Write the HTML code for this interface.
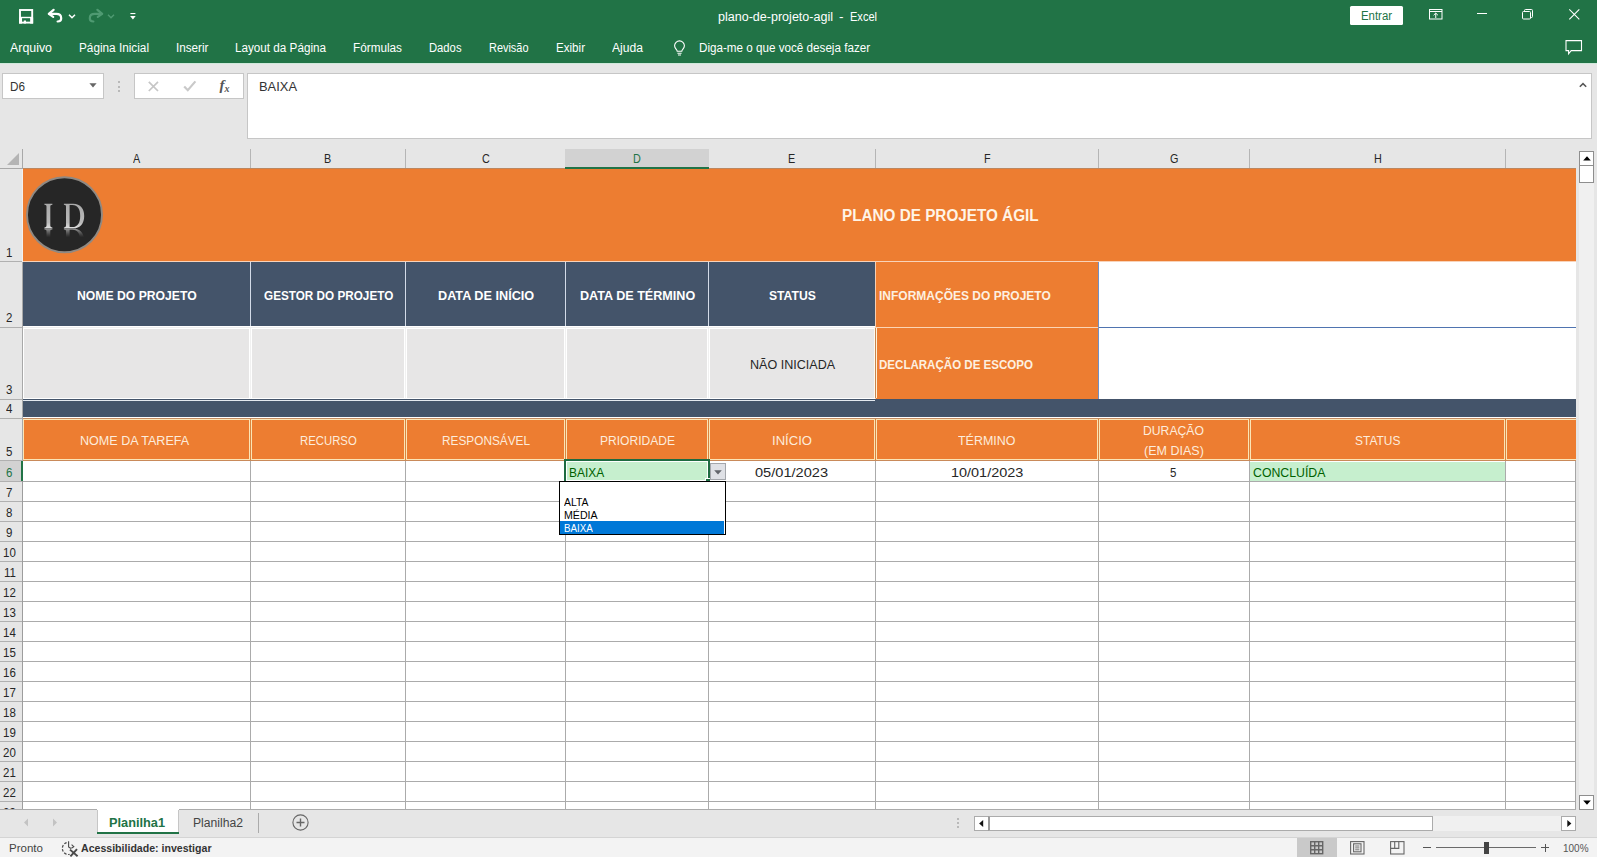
<!DOCTYPE html>
<html><head><meta charset="utf-8"><title>Excel</title>
<style>
html,body{margin:0;padding:0;}
body{width:1597px;height:857px;overflow:hidden;position:relative;background:#e6e6e6;font-family:"Liberation Sans",sans-serif;font-size:12px;color:#222;}
.abs{position:absolute;}
.t{position:absolute;white-space:nowrap;line-height:1;}
svg{position:absolute;overflow:visible;}
</style></head><body>

<div class="abs" style="left:0px;top:0px;width:1597px;height:63px;background:#217346;"></div>
<div class="abs" style="left:0px;top:63px;width:1597px;height:1px;background:#cfe8da;"></div>
<svg style="left:19px;top:8.8px" width="15" height="15" viewBox="0 0 15 15" fill="none" stroke="#fff"><rect x="1" y="1" width="12.2" height="12.6" stroke-width="1.9"/><path d="M1 8.500h12.200" stroke-width="1.400"/><rect x="0.050" y="8.500" width="3" height="6.050" fill="#fff" stroke="none"/><rect x="11.150" y="8.500" width="3" height="6.050" fill="#fff" stroke="none"/><rect x="4.800" y="11.500" width="2.200" height="3" fill="#fff" stroke="none"/></svg>
<svg style="left:47px;top:8px" width="18" height="16" viewBox="0 0 18 16" fill="none" stroke="#fff" stroke-width="2.2" stroke-linecap="round" stroke-linejoin="round"><path d="M6.6 1.8L1.8 5.9l4.4 2.9"/><path d="M2.4 5.9h6.8c3.200 0 5 1.800 5 4.300 0 2-1.400 3.300-3.600 3.300"/></svg>
<svg style="left:68px;top:13.5px" width="8" height="5" viewBox="0 0 8 5" fill="none" stroke="#fff" stroke-width="1.5"><path d="M1 0.8l3 2.900 3-2.900"/></svg>
<svg style="left:86px;top:8px" width="18" height="16" viewBox="0 0 18 16" fill="none" stroke="#4f9a72" stroke-width="2.2" stroke-linecap="round" stroke-linejoin="round"><path d="M11.400 1.800l4.800 4.100-4.400 2.900"/><path d="M15.600 5.900H8.800c-3.200 0-5 1.800-5 4.300 0 2 1.400 3.300 3.600 3.300"/></svg>
<svg style="left:107px;top:13.500px" width="8" height="5" viewBox="0 0 8 5" fill="none" stroke="#4f9a72" stroke-width="1.4"><path d="M1 0.8l3 2.900 3-2.900"/></svg>
<svg style="left:130px;top:12.6px" width="6" height="8" viewBox="0 0 6 8"><rect x="0.4" y="0" width="5" height="1.100" fill="#fff"/><path d="M0.1 3h5.600L2.900 6.600z" fill="#fff"/></svg>
<div class="t" style="left:718.00px;top:10px;line-height:14px;font-size:12px;color:#fff;font-weight:normal;transform:scaleX(1.0448);transform-origin:0 0;">plano-de-projeto-agil</div>
<div class="t" style="left:839.00px;top:10px;line-height:14px;font-size:12px;color:#fff;font-weight:normal;transform:scaleX(1.1260);transform-origin:0 0;">-</div>
<div class="t" style="left:850.00px;top:10px;line-height:14px;font-size:12px;color:#fff;font-weight:normal;transform:scaleX(0.9201);transform-origin:0 0;">Excel</div>
<div class="abs" style="left:1350px;top:6px;width:53px;height:19px;background:#fff;border-radius:1.5px"></div>
<div class="t" style="left:1361.00px;top:9px;line-height:14px;font-size:12px;color:#217346;font-weight:normal;transform:scaleX(0.9486);transform-origin:0 0;">Entrar</div>
<svg style="left:1429px;top:9px" width="14" height="11" viewBox="0 0 14 11" fill="none" stroke="#fff" stroke-width="1"><rect x="0.5" y="0.5" width="12.5" height="9.5"/><path d="M0.5 2.5h12.5"/><path d="M6.75 9V4.2M4.6 6.2l2.15-2.1 2.15 2.1"/></svg>
<div class="abs" style="left:1477px;top:13px;width:10px;height:1px;background:#fff;"></div>
<svg style="left:1522px;top:9px" width="12" height="11" viewBox="0 0 12 11" fill="none" stroke="#fff" stroke-width="1"><rect x="0.5" y="2.5" width="8" height="7.5" rx="1"/><path d="M2.5 2.5v-1a1 1 0 0 1 1-1h6a1 1 0 0 1 1 1v6a1 1 0 0 1-1 1h-1"/></svg>
<svg style="left:1569px;top:9px" width="11" height="11" viewBox="0 0 11 11" fill="none" stroke="#fff" stroke-width="1.1"><path d="M0.3 0.3l10 10M10.3 0.3l-10 10"/></svg>
<svg style="left:1565px;top:40px" width="18" height="16" viewBox="0 0 18 16" fill="none" stroke="#fff" stroke-width="1.1"><path d="M1 0.6h15.5v10H6.2L3.6 13.8V10.6H1z"/></svg>
<div class="t" style="left:10.00px;top:41px;line-height:14px;font-size:12px;color:#fff;font-weight:normal;transform:scaleX(1.0322);transform-origin:0 0;">Arquivo</div>
<div class="t" style="left:79.00px;top:41px;line-height:14px;font-size:12px;color:#fff;font-weight:normal;transform:scaleX(0.9806);transform-origin:0 0;">Página Inicial</div>
<div class="t" style="left:175.50px;top:41px;line-height:14px;font-size:12px;color:#fff;font-weight:normal;transform:scaleX(0.9748);transform-origin:0 0;">Inserir</div>
<div class="t" style="left:234.50px;top:41px;line-height:14px;font-size:12px;color:#fff;font-weight:normal;transform:scaleX(0.9742);transform-origin:0 0;">Layout da Página</div>
<div class="t" style="left:352.50px;top:41px;line-height:14px;font-size:12px;color:#fff;font-weight:normal;transform:scaleX(0.9798);transform-origin:0 0;">Fórmulas</div>
<div class="t" style="left:428.50px;top:41px;line-height:14px;font-size:12px;color:#fff;font-weight:normal;transform:scaleX(0.9369);transform-origin:0 0;">Dados</div>
<div class="t" style="left:488.50px;top:41px;line-height:14px;font-size:12px;color:#fff;font-weight:normal;transform:scaleX(0.9111);transform-origin:0 0;">Revisão</div>
<div class="t" style="left:556.00px;top:41px;line-height:14px;font-size:12px;color:#fff;font-weight:normal;transform:scaleX(0.9664);transform-origin:0 0;">Exibir</div>
<div class="t" style="left:612.00px;top:41px;line-height:14px;font-size:12px;color:#fff;font-weight:normal;transform:scaleX(1.0100);transform-origin:0 0;">Ajuda</div>
<div class="t" style="left:698.50px;top:41px;line-height:14px;font-size:12px;color:#fff;font-weight:normal;transform:scaleX(0.9716);transform-origin:0 0;">Diga-me o que você deseja fazer</div>
<svg style="left:673px;top:40px" width="13" height="16" viewBox="0 0 13 16" fill="none" stroke="#fff" stroke-width="1.1"><path d="M4.2 11.2c0-1.4-2.6-2.6-2.6-5.4a4.9 4.9 0 0 1 9.8 0c0 2.8-2.6 4-2.6 5.4z"/><path d="M4.4 13.2h4.2M5 15h3"/></svg>
<div class="abs" style="left:0px;top:64px;width:1597px;height:85px;background:#e6e6e6;"></div>
<div class="abs" style="left:2px;top:73px;width:102px;height:26px;background:#fff;box-sizing:border-box;border:1px solid #c6c6c6"></div>
<div class="t" style="left:10.00px;top:80px;line-height:14px;font-size:12px;color:#333;font-weight:normal;transform:scaleX(0.9778);transform-origin:0 0;">D6</div>
<svg style="left:89px;top:83px" width="8" height="5" viewBox="0 0 8 5"><path d="M0.4 0.3h7.2L4 4.5z" fill="#666"/></svg>
<div class="abs" style="left:118px;top:81px;width:2px;height:2px;background:#b9b9b9;"></div>
<div class="abs" style="left:118px;top:85.5px;width:2px;height:2px;background:#b9b9b9;"></div>
<div class="abs" style="left:118px;top:90px;width:2px;height:2px;background:#b9b9b9;"></div>
<div class="abs" style="left:134px;top:73px;width:110px;height:26px;background:#fff;box-sizing:border-box;border:1px solid #c6c6c6"></div>
<svg style="left:147.5px;top:81px" width="11" height="11" viewBox="0 0 11 11" fill="none" stroke="#c6c6c6" stroke-width="1.7"><path d="M0.8 0.8l9.2 9.2M10 0.8L0.8 10"/></svg>
<svg style="left:182.5px;top:80px" width="14" height="12" viewBox="0 0 14 12" fill="none" stroke="#c9c9c9" stroke-width="2.2"><path d="M1.2 6.4l3.6 3.8L12.4 1.4"/></svg>
<div class="t" style="left:219.5px;top:77px;line-height:17px;font-family:'Liberation Serif',serif;font-style:italic;font-weight:bold;font-size:15px;color:#555;">f</div>
<div class="t" style="left:224.6px;top:82.5px;line-height:12px;font-family:'Liberation Serif',serif;font-style:italic;font-weight:bold;font-size:10px;color:#555;">x</div>
<div class="abs" style="left:247px;top:73px;width:1345px;height:66px;background:#fff;box-sizing:border-box;border:1px solid #c6c6c6"></div>
<div class="t" style="left:259.00px;top:80px;line-height:14px;font-size:12px;color:#333;font-weight:normal;transform:scaleX(1.0749);transform-origin:0 0;">BAIXA</div>
<svg style="left:1579px;top:82px" width="8" height="6" viewBox="0 0 8 6" fill="none" stroke="#555" stroke-width="1.5"><path d="M0.8 4.8L4 1.6l3.2 3.2"/></svg>
<div class="abs" id="sheet" style="left:0;top:149px;width:1576px;height:660px;overflow:hidden;background:#fff">
<div class="abs" style="left:0px;top:0px;width:1576px;height:20px;background:#e6e6e6;"></div>
<div class="abs" style="left:0px;top:20px;width:23px;height:640px;background:#e6e6e6;"></div>
<div class="abs" style="left:250px;top:0px;width:1px;height:19px;background:#b5b5b5;"></div>
<div class="t" style="left:132.90px;top:3px;line-height:14px;font-size:12px;color:#262626;font-weight:normal;transform:scaleX(0.9000);transform-origin:0 0;">A</div>
<div class="abs" style="left:405px;top:0px;width:1px;height:19px;background:#b5b5b5;"></div>
<div class="t" style="left:324.40px;top:3px;line-height:14px;font-size:12px;color:#262626;font-weight:normal;transform:scaleX(0.9000);transform-origin:0 0;">B</div>
<div class="t" style="left:481.60px;top:3px;line-height:14px;font-size:12px;color:#262626;font-weight:normal;transform:scaleX(0.9000);transform-origin:0 0;">C</div>
<div class="abs" style="left:565px;top:0px;width:144px;height:18px;background:#d2d2d2;"></div>
<div class="abs" style="left:565px;top:18px;width:144px;height:2px;background:#217346;"></div>
<div class="t" style="left:633.10px;top:3px;line-height:14px;font-size:12px;color:#217346;font-weight:normal;transform:scaleX(0.9000);transform-origin:0 0;">D</div>
<div class="abs" style="left:875px;top:0px;width:1px;height:19px;background:#b5b5b5;"></div>
<div class="t" style="left:788.40px;top:3px;line-height:14px;font-size:12px;color:#262626;font-weight:normal;transform:scaleX(0.9000);transform-origin:0 0;">E</div>
<div class="abs" style="left:1098px;top:0px;width:1px;height:19px;background:#b5b5b5;"></div>
<div class="t" style="left:983.70px;top:3px;line-height:14px;font-size:12px;color:#262626;font-weight:normal;transform:scaleX(0.9000);transform-origin:0 0;">F</div>
<div class="abs" style="left:1249px;top:0px;width:1px;height:19px;background:#b5b5b5;"></div>
<div class="t" style="left:1169.80px;top:3px;line-height:14px;font-size:12px;color:#262626;font-weight:normal;transform:scaleX(0.9000);transform-origin:0 0;">G</div>
<div class="abs" style="left:1505px;top:0px;width:1px;height:19px;background:#b5b5b5;"></div>
<div class="t" style="left:1373.60px;top:3px;line-height:14px;font-size:12px;color:#262626;font-weight:normal;transform:scaleX(0.9000);transform-origin:0 0;">H</div>
<svg style="left:7px;top:4px" width="12" height="12" viewBox="0 0 12 12"><path d="M12 0v12h-12z" fill="#b4b4b4"/></svg>
<div class="abs" style="left:0px;top:112px;width:22px;height:1px;background:#b0b0b0;"></div>
<div class="t" style="left:6.40px;top:97px;line-height:14px;font-size:12.5px;color:#262626;font-weight:normal;transform:scaleX(0.9200);transform-origin:0 0;">1</div>
<div class="abs" style="left:0px;top:178px;width:22px;height:1px;background:#b0b0b0;"></div>
<div class="t" style="left:6.40px;top:162px;line-height:14px;font-size:12.5px;color:#262626;font-weight:normal;transform:scaleX(0.9200);transform-origin:0 0;">2</div>
<div class="abs" style="left:0px;top:250px;width:22px;height:1px;background:#b0b0b0;"></div>
<div class="t" style="left:6.40px;top:234px;line-height:14px;font-size:12.5px;color:#262626;font-weight:normal;transform:scaleX(0.9200);transform-origin:0 0;">3</div>
<div class="abs" style="left:0px;top:269px;width:22px;height:1px;background:#b0b0b0;"></div>
<div class="t" style="left:6.40px;top:253px;line-height:14px;font-size:12.5px;color:#262626;font-weight:normal;transform:scaleX(0.9200);transform-origin:0 0;">4</div>
<div class="abs" style="left:0px;top:311px;width:22px;height:1px;background:#b0b0b0;"></div>
<div class="t" style="left:6.40px;top:296px;line-height:14px;font-size:12.5px;color:#262626;font-weight:normal;transform:scaleX(0.9200);transform-origin:0 0;">5</div>
<div class="abs" style="left:0px;top:332px;width:22px;height:1px;background:#b0b0b0;"></div>
<div class="abs" style="left:0px;top:312px;width:22px;height:20px;background:#d2d2d2;"></div>
<div class="abs" style="left:21px;top:312px;width:2px;height:20px;background:#217346;"></div>
<div class="t" style="left:6.40px;top:317px;line-height:14px;font-size:12.5px;color:#217346;font-weight:normal;transform:scaleX(0.9200);transform-origin:0 0;">6</div>
<div class="abs" style="left:0px;top:352px;width:22px;height:1px;background:#b0b0b0;"></div>
<div class="t" style="left:6.40px;top:337px;line-height:14px;font-size:12.5px;color:#262626;font-weight:normal;transform:scaleX(0.9200);transform-origin:0 0;">7</div>
<div class="abs" style="left:0px;top:372px;width:22px;height:1px;background:#b0b0b0;"></div>
<div class="t" style="left:6.40px;top:357px;line-height:14px;font-size:12.5px;color:#262626;font-weight:normal;transform:scaleX(0.9200);transform-origin:0 0;">8</div>
<div class="abs" style="left:0px;top:392px;width:22px;height:1px;background:#b0b0b0;"></div>
<div class="t" style="left:6.40px;top:377px;line-height:14px;font-size:12.5px;color:#262626;font-weight:normal;transform:scaleX(0.9200);transform-origin:0 0;">9</div>
<div class="abs" style="left:0px;top:412px;width:22px;height:1px;background:#b0b0b0;"></div>
<div class="t" style="left:3.20px;top:397px;line-height:14px;font-size:12.5px;color:#262626;font-weight:normal;transform:scaleX(0.9200);transform-origin:0 0;">10</div>
<div class="abs" style="left:0px;top:432px;width:22px;height:1px;background:#b0b0b0;"></div>
<div class="t" style="left:3.63px;top:417px;line-height:14px;font-size:12.5px;color:#262626;font-weight:normal;transform:scaleX(0.9200);transform-origin:0 0;">11</div>
<div class="abs" style="left:0px;top:452px;width:22px;height:1px;background:#b0b0b0;"></div>
<div class="t" style="left:3.20px;top:437px;line-height:14px;font-size:12.5px;color:#262626;font-weight:normal;transform:scaleX(0.9200);transform-origin:0 0;">12</div>
<div class="abs" style="left:0px;top:472px;width:22px;height:1px;background:#b0b0b0;"></div>
<div class="t" style="left:3.20px;top:457px;line-height:14px;font-size:12.5px;color:#262626;font-weight:normal;transform:scaleX(0.9200);transform-origin:0 0;">13</div>
<div class="abs" style="left:0px;top:492px;width:22px;height:1px;background:#b0b0b0;"></div>
<div class="t" style="left:3.20px;top:477px;line-height:14px;font-size:12.5px;color:#262626;font-weight:normal;transform:scaleX(0.9200);transform-origin:0 0;">14</div>
<div class="abs" style="left:0px;top:512px;width:22px;height:1px;background:#b0b0b0;"></div>
<div class="t" style="left:3.20px;top:497px;line-height:14px;font-size:12.5px;color:#262626;font-weight:normal;transform:scaleX(0.9200);transform-origin:0 0;">15</div>
<div class="abs" style="left:0px;top:532px;width:22px;height:1px;background:#b0b0b0;"></div>
<div class="t" style="left:3.20px;top:517px;line-height:14px;font-size:12.5px;color:#262626;font-weight:normal;transform:scaleX(0.9200);transform-origin:0 0;">16</div>
<div class="abs" style="left:0px;top:552px;width:22px;height:1px;background:#b0b0b0;"></div>
<div class="t" style="left:3.20px;top:537px;line-height:14px;font-size:12.5px;color:#262626;font-weight:normal;transform:scaleX(0.9200);transform-origin:0 0;">17</div>
<div class="abs" style="left:0px;top:572px;width:22px;height:1px;background:#b0b0b0;"></div>
<div class="t" style="left:3.20px;top:557px;line-height:14px;font-size:12.5px;color:#262626;font-weight:normal;transform:scaleX(0.9200);transform-origin:0 0;">18</div>
<div class="abs" style="left:0px;top:592px;width:22px;height:1px;background:#b0b0b0;"></div>
<div class="t" style="left:3.20px;top:577px;line-height:14px;font-size:12.5px;color:#262626;font-weight:normal;transform:scaleX(0.9200);transform-origin:0 0;">19</div>
<div class="abs" style="left:0px;top:612px;width:22px;height:1px;background:#b0b0b0;"></div>
<div class="t" style="left:3.20px;top:597px;line-height:14px;font-size:12.5px;color:#262626;font-weight:normal;transform:scaleX(0.9200);transform-origin:0 0;">20</div>
<div class="abs" style="left:0px;top:632px;width:22px;height:1px;background:#b0b0b0;"></div>
<div class="t" style="left:3.20px;top:617px;line-height:14px;font-size:12.5px;color:#262626;font-weight:normal;transform:scaleX(0.9200);transform-origin:0 0;">21</div>
<div class="abs" style="left:0px;top:652px;width:22px;height:1px;background:#b0b0b0;"></div>
<div class="t" style="left:3.20px;top:637px;line-height:14px;font-size:12.5px;color:#262626;font-weight:normal;transform:scaleX(0.9200);transform-origin:0 0;">22</div>
<div class="abs" style="left:0px;top:672px;width:22px;height:1px;background:#b0b0b0;"></div>
<div class="t" style="left:3.20px;top:657px;line-height:14px;font-size:12.5px;color:#262626;font-weight:normal;transform:scaleX(0.9200);transform-origin:0 0;">23</div>
<div class="abs" style="left:0px;top:19px;width:22px;height:1px;background:#a8a8a8;"></div>
<div class="abs" style="left:22px;top:0px;width:1px;height:20px;background:#a8a8a8;"></div>
<div class="abs" style="left:22px;top:20px;width:1px;height:93px;background:#f1f1f1;"></div>
<div class="abs" style="left:22px;top:113px;width:1px;height:199px;background:#a8a8a8;"></div>
<div class="abs" style="left:22px;top:312px;width:1px;height:350px;background:#9d9d9d;"></div>
<div class="abs" style="left:21px;top:312px;width:2px;height:20px;background:#217346;"></div>
<div class="abs" style="left:23px;top:19px;width:1553px;height:94px;background:#ed7d31;"></div>
<div class="abs" style="left:23px;top:19px;width:1553px;height:1px;background:#bd875f;"></div>
<div class="abs" style="left:565px;top:18px;width:144px;height:2px;background:#217346;"></div>
<svg style="left:25px;top:27px" width="80" height="80" viewBox="0 0 80 80">
<defs><linearGradient id="lg" gradientUnits="userSpaceOnUse" x1="0" y1="27" x2="0" y2="53"><stop offset="0" stop-color="#a9a9a9"/><stop offset="0.75" stop-color="#b9b9b9"/><stop offset="1" stop-color="#e6e6e6"/></linearGradient>
<linearGradient id="lr" gradientUnits="userSpaceOnUse" x1="0" y1="52.3" x2="0" y2="43.5"><stop offset="0" stop-color="#cfcfcf" stop-opacity="0.7"/><stop offset="1" stop-color="#888" stop-opacity="0"/></linearGradient></defs>
<circle cx="39.5" cy="38.7" r="37.5" fill="#262626" stroke="#8f8983" stroke-width="1.9"/>
<g fill="url(#lg)"><path d="M19.4 27.8h8v0.9c-1.6 0.1-2.1 0.5-2.1 1.8v19.1c0 1.3 0.5 1.7 2.1 1.8v0.9h-8v-0.9c1.6-0.1 2.1-0.5 2.1-1.8V30.5c0-1.3-0.5-1.7-2.1-1.8z"/><path fill-rule="evenodd" d="M38.9 27.8h9.3c7.4 0 11 5 11 12.1 0 7.300-3.800 12.400-11.200 12.400h-9.100v-0.900c1.600-0.100 2.100-0.500 2.100-1.800V30.500c0-1.300-0.500-1.700-2.100-1.800zM44.600 29.100v21.900h2.800c5.400 0 7.800-4.400 7.800-11.100 0-6.500-2.400-10.800-7.800-10.800z"/></g>
<g fill="url(#lr)" transform="translate(0 104.8) scale(1 -1)"><path d="M19.4 27.8h8v0.9c-1.6 0.1-2.1 0.5-2.1 1.8v19.1c0 1.3 0.5 1.7 2.1 1.8v0.9h-8v-0.9c1.6-0.1 2.1-0.5 2.1-1.8V30.5c0-1.3-0.5-1.7-2.1-1.8z"/><path fill-rule="evenodd" d="M38.9 27.8h9.3c7.4 0 11 5 11 12.1 0 7.300-3.800 12.400-11.200 12.400h-9.100v-0.900c1.600-0.100 2.100-0.500 2.100-1.800V30.500c0-1.300-0.500-1.700-2.100-1.800zM44.600 29.100v21.900h2.800c5.400 0 7.800-4.400 7.800-11.100 0-6.500-2.400-10.800-7.800-10.800z"/></g>
</svg>
<div class="t" style="left:842.20px;top:58px;line-height:17px;font-size:16px;color:#fff4e6;font-weight:bold;transform:scaleX(0.9546);transform-origin:0 0;">PLANO DE PROJETO ÁGIL</div>
<div class="abs" style="left:23px;top:112px;width:1553px;height:1px;background:#f9d3b9;"></div>
<div class="abs" style="left:23px;top:113px;width:852px;height:64px;background:#44546a;"></div>
<div class="abs" style="left:250px;top:113px;width:1px;height:64px;background:#d3dbe8;"></div>
<div class="abs" style="left:405px;top:113px;width:1px;height:64px;background:#d3dbe8;"></div>
<div class="abs" style="left:565px;top:113px;width:1px;height:64px;background:#d3dbe8;"></div>
<div class="abs" style="left:708px;top:113px;width:1px;height:64px;background:#d3dbe8;"></div>
<div class="abs" style="left:875px;top:113px;width:223px;height:65px;background:#ed7d31;"></div>
<div class="abs" style="left:875px;top:113px;width:1px;height:137px;background:#f6cfb3;"></div>
<div class="abs" style="left:1098px;top:113px;width:478px;height:65px;background:#fff;"></div>
<div class="abs" style="left:1098px;top:113px;width:1px;height:137px;background:#7f9bc8;"></div>
<div class="t" style="left:77.20px;top:139px;line-height:15px;font-size:13px;color:#fff;font-weight:bold;transform:scaleX(0.9380);transform-origin:0 0;">NOME DO PROJETO</div>
<div class="t" style="left:264.00px;top:139px;line-height:15px;font-size:13px;color:#fff;font-weight:bold;transform:scaleX(0.9025);transform-origin:0 0;">GESTOR DO PROJETO</div>
<div class="t" style="left:438.40px;top:139px;line-height:15px;font-size:13px;color:#fff;font-weight:bold;transform:scaleX(0.9747);transform-origin:0 0;">DATA DE INÍCIO</div>
<div class="t" style="left:580.20px;top:139px;line-height:15px;font-size:13px;color:#fff;font-weight:bold;transform:scaleX(0.9687);transform-origin:0 0;">DATA DE TÉRMINO</div>
<div class="t" style="left:769.20px;top:139px;line-height:15px;font-size:13px;color:#fff;font-weight:bold;transform:scaleX(0.9346);transform-origin:0 0;">STATUS</div>
<div class="t" style="left:878.50px;top:139px;line-height:15px;font-size:13px;color:#fdf0e0;font-weight:bold;transform:scaleX(0.9231);transform-origin:0 0;">INFORMAÇÕES DO PROJETO</div>
<div class="abs" style="left:23px;top:177px;width:852px;height:73px;background:#e7e6e6;"></div>
<div class="abs" style="left:23px;top:177px;width:852px;height:1px;background:#fff;"></div>
<div class="abs" style="left:23px;top:178px;width:852px;height:1px;background:#efefef;"></div>
<div class="abs" style="left:23px;top:179px;width:852px;height:1px;background:#fff;"></div>
<div class="abs" style="left:249px;top:179px;width:1px;height:70px;background:#fff;"></div>
<div class="abs" style="left:250px;top:179px;width:1px;height:70px;background:#f1f1f1;"></div>
<div class="abs" style="left:251px;top:179px;width:1px;height:70px;background:#fff;"></div>
<div class="abs" style="left:404px;top:179px;width:1px;height:70px;background:#fff;"></div>
<div class="abs" style="left:405px;top:179px;width:1px;height:70px;background:#f1f1f1;"></div>
<div class="abs" style="left:406px;top:179px;width:1px;height:70px;background:#fff;"></div>
<div class="abs" style="left:564px;top:179px;width:1px;height:70px;background:#fff;"></div>
<div class="abs" style="left:565px;top:179px;width:1px;height:70px;background:#f1f1f1;"></div>
<div class="abs" style="left:566px;top:179px;width:1px;height:70px;background:#fff;"></div>
<div class="abs" style="left:707px;top:179px;width:1px;height:70px;background:#fff;"></div>
<div class="abs" style="left:708px;top:179px;width:1px;height:70px;background:#f1f1f1;"></div>
<div class="abs" style="left:709px;top:179px;width:1px;height:70px;background:#fff;"></div>
<div class="abs" style="left:23px;top:179px;width:1px;height:70px;background:#fff;"></div>
<div class="abs" style="left:874px;top:179px;width:1px;height:70px;background:#fffaf0;"></div>
<div class="abs" style="left:23px;top:249px;width:852px;height:1px;background:#fff;"></div>
<div class="abs" style="left:876px;top:179px;width:222px;height:71px;background:#ed7d31;"></div>
<div class="abs" style="left:1099px;top:179px;width:477px;height:71px;background:#fff;"></div>
<div class="abs" style="left:876px;top:178px;width:222px;height:1px;background:#fcd5b5;"></div>
<div class="abs" style="left:1098px;top:178px;width:478px;height:1px;background:#4f74b0;"></div>
<div class="abs" style="left:1098px;top:113px;width:1px;height:137px;background:#6f8fc4;"></div>
<div class="abs" style="left:875px;top:113px;width:1px;height:137px;background:#f6cfb3;"></div>
<div class="abs" style="left:875px;top:179px;width:1px;height:70px;background:#c9854f;"></div>
<div class="abs" style="left:876px;top:179px;width:1px;height:70px;background:#fff2d8;"></div>
<div class="t" style="left:749.80px;top:209px;line-height:14px;font-size:12.5px;color:#262626;font-weight:normal;transform:scaleX(1.0043);transform-origin:0 0;">NÃO INICIADA</div>
<div class="t" style="left:878.50px;top:208px;line-height:15px;font-size:13px;color:#fdf0e0;font-weight:bold;transform:scaleX(0.8884);transform-origin:0 0;">DECLARAÇÃO DE ESCOPO</div>
<div class="abs" style="left:23px;top:250px;width:1553px;height:18px;background:#44546a;"></div>
<div class="abs" style="left:23px;top:251px;width:852px;height:1px;background:#e3e8ef;"></div>
<div class="abs" style="left:23px;top:268px;width:1553px;height:1px;background:#fff;"></div>
<div class="abs" style="left:23px;top:269px;width:1553px;height:43px;background:#ed7d31;"></div>
<div class="abs" style="left:23px;top:269px;width:1553px;height:1px;background:#c48a5f;"></div>
<div class="abs" style="left:23px;top:311px;width:1553px;height:1px;background:#c98a5a;"></div>
<div class="abs" style="left:23px;top:270px;width:227px;height:41px;box-sizing:border-box;border:1px solid #fbe5b6"></div>
<div class="abs" style="left:250px;top:270px;width:1px;height:41px;background:#d9843f;"></div>
<div class="abs" style="left:251px;top:270px;width:154px;height:41px;box-sizing:border-box;border:1px solid #fbe5b6"></div>
<div class="abs" style="left:405px;top:270px;width:1px;height:41px;background:#d9843f;"></div>
<div class="abs" style="left:406px;top:270px;width:159px;height:41px;box-sizing:border-box;border:1px solid #fbe5b6"></div>
<div class="abs" style="left:565px;top:270px;width:1px;height:41px;background:#d9843f;"></div>
<div class="abs" style="left:566px;top:270px;width:142px;height:41px;box-sizing:border-box;border:1px solid #fbe5b6"></div>
<div class="abs" style="left:708px;top:270px;width:1px;height:41px;background:#d9843f;"></div>
<div class="abs" style="left:709px;top:270px;width:166px;height:41px;box-sizing:border-box;border:1px solid #fbe5b6"></div>
<div class="abs" style="left:875px;top:270px;width:1px;height:41px;background:#d9843f;"></div>
<div class="abs" style="left:876px;top:270px;width:222px;height:41px;box-sizing:border-box;border:1px solid #fbe5b6"></div>
<div class="abs" style="left:1098px;top:270px;width:1px;height:41px;background:#d9843f;"></div>
<div class="abs" style="left:1099px;top:270px;width:150px;height:41px;box-sizing:border-box;border:1px solid #fbe5b6"></div>
<div class="abs" style="left:1249px;top:270px;width:1px;height:41px;background:#d9843f;"></div>
<div class="abs" style="left:1250px;top:270px;width:255px;height:41px;box-sizing:border-box;border:1px solid #fbe5b6"></div>
<div class="abs" style="left:1505px;top:270px;width:1px;height:41px;background:#d9843f;"></div>
<div class="abs" style="left:1506px;top:270px;width:76px;height:41px;box-sizing:border-box;border:1px solid #fbe5b6"></div>
<div class="t" style="left:80.20px;top:285px;line-height:14px;font-size:12.5px;color:#fdecdc;font-weight:normal;transform:scaleX(1.0056);transform-origin:0 0;">NOME DA TAREFA</div>
<div class="t" style="left:300.00px;top:285px;line-height:14px;font-size:12.5px;color:#fdecdc;font-weight:normal;transform:scaleX(0.9071);transform-origin:0 0;">RECURSO</div>
<div class="t" style="left:441.90px;top:285px;line-height:14px;font-size:12.5px;color:#fdecdc;font-weight:normal;transform:scaleX(0.9463);transform-origin:0 0;">RESPONSÁVEL</div>
<div class="t" style="left:599.60px;top:285px;line-height:14px;font-size:12.5px;color:#fdecdc;font-weight:normal;transform:scaleX(0.9654);transform-origin:0 0;">PRIORIDADE</div>
<div class="t" style="left:772.00px;top:285px;line-height:14px;font-size:12.5px;color:#fdecdc;font-weight:normal;transform:scaleX(1.0472);transform-origin:0 0;">INÍCIO</div>
<div class="t" style="left:958.20px;top:285px;line-height:14px;font-size:12.5px;color:#fdecdc;font-weight:normal;transform:scaleX(0.9959);transform-origin:0 0;">TÉRMINO</div>
<div class="t" style="left:1354.90px;top:285px;line-height:14px;font-size:12.5px;color:#fdecdc;font-weight:normal;transform:scaleX(0.9567);transform-origin:0 0;">STATUS</div>
<div class="t" style="left:1143.40px;top:275px;line-height:14px;font-size:12.5px;color:#fdecdc;font-weight:normal;transform:scaleX(0.9759);transform-origin:0 0;">DURAÇÃO</div>
<div class="t" style="left:1144.20px;top:295px;line-height:14px;font-size:12.5px;color:#fdecdc;font-weight:normal;transform:scaleX(1.0012);transform-origin:0 0;">(EM DIAS)</div>
<div class="abs" style="left:23px;top:332px;width:1553px;height:1px;background:#ababab;"></div>
<div class="abs" style="left:23px;top:352px;width:1553px;height:1px;background:#ababab;"></div>
<div class="abs" style="left:23px;top:372px;width:1553px;height:1px;background:#ababab;"></div>
<div class="abs" style="left:23px;top:392px;width:1553px;height:1px;background:#ababab;"></div>
<div class="abs" style="left:23px;top:412px;width:1553px;height:1px;background:#ababab;"></div>
<div class="abs" style="left:23px;top:432px;width:1553px;height:1px;background:#ababab;"></div>
<div class="abs" style="left:23px;top:452px;width:1553px;height:1px;background:#ababab;"></div>
<div class="abs" style="left:23px;top:472px;width:1553px;height:1px;background:#ababab;"></div>
<div class="abs" style="left:23px;top:492px;width:1553px;height:1px;background:#ababab;"></div>
<div class="abs" style="left:23px;top:512px;width:1553px;height:1px;background:#ababab;"></div>
<div class="abs" style="left:23px;top:532px;width:1553px;height:1px;background:#ababab;"></div>
<div class="abs" style="left:23px;top:552px;width:1553px;height:1px;background:#ababab;"></div>
<div class="abs" style="left:23px;top:572px;width:1553px;height:1px;background:#ababab;"></div>
<div class="abs" style="left:23px;top:592px;width:1553px;height:1px;background:#ababab;"></div>
<div class="abs" style="left:23px;top:612px;width:1553px;height:1px;background:#ababab;"></div>
<div class="abs" style="left:23px;top:632px;width:1553px;height:1px;background:#ababab;"></div>
<div class="abs" style="left:23px;top:652px;width:1553px;height:1px;background:#ababab;"></div>
<div class="abs" style="left:23px;top:672px;width:1553px;height:1px;background:#ababab;"></div>
<div class="abs" style="left:250px;top:312px;width:1px;height:360px;background:#ababab;"></div>
<div class="abs" style="left:405px;top:312px;width:1px;height:360px;background:#ababab;"></div>
<div class="abs" style="left:565px;top:312px;width:1px;height:360px;background:#ababab;"></div>
<div class="abs" style="left:708px;top:312px;width:1px;height:360px;background:#ababab;"></div>
<div class="abs" style="left:875px;top:312px;width:1px;height:360px;background:#ababab;"></div>
<div class="abs" style="left:1098px;top:312px;width:1px;height:360px;background:#ababab;"></div>
<div class="abs" style="left:1249px;top:312px;width:1px;height:360px;background:#ababab;"></div>
<div class="abs" style="left:1505px;top:312px;width:1px;height:360px;background:#ababab;"></div>
<div class="abs" style="left:1575px;top:312px;width:1px;height:348px;background:#a6a6a6;"></div>
<div class="abs" style="left:1250px;top:313px;width:255px;height:19px;background:#c6efce;"></div>
<div class="t" style="left:1252.60px;top:317px;line-height:14px;font-size:12.5px;color:#006100;font-weight:normal;transform:scaleX(0.9834);transform-origin:0 0;">CONCLUÍDA</div>
<div class="t" style="left:755.00px;top:317px;line-height:14px;font-size:12.5px;color:#262626;font-weight:normal;transform:scaleX(1.1668);transform-origin:0 0;">05/01/2023</div>
<div class="t" style="left:950.70px;top:317px;line-height:14px;font-size:12.5px;color:#262626;font-weight:normal;transform:scaleX(1.1556);transform-origin:0 0;">10/01/2023</div>
<div class="t" style="left:1170.30px;top:317px;line-height:14px;font-size:12.5px;color:#262626;font-weight:normal;transform:scaleX(0.9206);transform-origin:0 0;">5</div>
<div class="abs" style="left:564px;top:310px;width:146px;height:2px;background:#1e6b41;"></div>
<div class="abs" style="left:564px;top:310px;width:2px;height:22px;background:#1e6b41;"></div>
<div class="abs" style="left:708px;top:310px;width:2px;height:21px;background:#1e6b41;"></div>
<div class="abs" style="left:566px;top:312px;width:142px;height:20px;background:#fff;"></div>
<div class="abs" style="left:567px;top:313px;width:140px;height:18px;background:#c6efce;"></div>
<div class="t" style="left:568.90px;top:317px;line-height:14px;font-size:12.5px;color:#006100;font-weight:normal;transform:scaleX(0.9559);transform-origin:0 0;">BAIXA</div>
<div class="abs" style="left:705px;top:329px;width:5px;height:3px;background:#fff;"></div>
<div class="abs" style="left:706px;top:330px;width:4px;height:2px;background:#1e6b41;"></div>
<div class="abs" style="left:710px;top:314px;width:16px;height:17px;background:#dfe1e6;box-sizing:border-box;border:1px solid #a3a6ab"></div>
<svg style="left:714px;top:321px" width="8" height="5" viewBox="0 0 8 5"><path d="M0.2 0.3h7.6L4 4.6z" fill="#62656b"/></svg>
<div class="abs" style="left:559px;top:332px;width:167px;height:54px;background:#fff;box-sizing:border-box;border:1px solid #000"></div>
<div class="abs" style="left:560px;top:372px;width:164px;height:13px;background:#0078d7;"></div>
<div class="t" style="left:563.80px;top:347px;line-height:12px;font-size:10.5px;color:#000;font-weight:normal;transform:scaleX(0.9877);transform-origin:0 0;">ALTA</div>
<div class="t" style="left:563.80px;top:360px;line-height:12px;font-size:10.5px;color:#000;font-weight:normal;transform:scaleX(1.0104);transform-origin:0 0;">MÉDIA</div>
<div class="t" style="left:563.80px;top:373px;line-height:12px;font-size:10.5px;color:#fff;font-weight:normal;transform:scaleX(0.9311);transform-origin:0 0;">BAIXA</div>
</div>
<div class="abs" style="left:1576px;top:149px;width:21px;height:660px;background:#e6e6e6;"></div>
<div class="abs" style="left:1579px;top:166px;width:15px;height:630px;background:#f0f0f0;"></div>
<div class="abs" style="left:1579px;top:151px;width:15px;height:15px;background:#fff;box-sizing:border-box;border:1px solid #8e8e8e"></div>
<svg style="left:1582.5px;top:156px" width="8" height="5" viewBox="0 0 8 5"><path d="M4 0.2L7.8 4.6H0.2z" fill="#000"/></svg>
<div class="abs" style="left:1579px;top:165px;width:15px;height:18px;background:#fff;box-sizing:border-box;border:1px solid #8e8e8e"></div>
<div class="abs" style="left:0px;top:809px;width:1597px;height:29px;background:#e6e6e6;"></div>
<div class="abs" style="left:0px;top:809px;width:1576px;height:1px;background:#ababab;"></div>
<svg style="left:23px;top:818px" width="6" height="9" viewBox="0 0 6 9"><path d="M5 0.5L1 4.5l4 4z" fill="#c3c3c3"/></svg>
<svg style="left:52px;top:818px" width="6" height="9" viewBox="0 0 6 9"><path d="M1 0.5L5 4.5l-4 4z" fill="#c3c3c3"/></svg>
<div class="abs" style="left:97px;top:809px;width:82px;height:23px;background:#fff;"></div>
<div class="abs" style="left:97px;top:832px;width:82px;height:2px;background:#217346;"></div>
<div class="abs" style="left:97px;top:810px;width:1px;height:22px;background:#c6c6c6;"></div>
<div class="abs" style="left:178px;top:810px;width:1px;height:22px;background:#c6c6c6;"></div>
<div class="t" style="left:109.00px;top:816px;line-height:14px;font-size:12.5px;color:#217346;font-weight:bold;transform:scaleX(1.0203);transform-origin:0 0;">Planilha1</div>
<div class="t" style="left:193.00px;top:816px;line-height:14px;font-size:12.5px;color:#444;font-weight:normal;transform:scaleX(0.9722);transform-origin:0 0;">Planilha2</div>
<div class="abs" style="left:258px;top:813px;width:1px;height:20px;background:#ababab;"></div>
<svg style="left:291.6px;top:814px" width="17" height="17" viewBox="0 0 17 17" fill="none" stroke="#666" stroke-width="1.1"><circle cx="8.5" cy="8.5" r="7.6"/><path d="M8.5 4.5v8M4.5 8.5h8" stroke-width="1.4"/></svg>
<div class="abs" style="left:957px;top:818px;width:2px;height:2px;background:#b9b9b9;"></div>
<div class="abs" style="left:957px;top:822px;width:2px;height:2px;background:#b9b9b9;"></div>
<div class="abs" style="left:957px;top:826px;width:2px;height:2px;background:#b9b9b9;"></div>
<div class="abs" style="left:989px;top:816px;width:572px;height:15px;background:#f0f0f0;"></div>
<div class="abs" style="left:974px;top:816px;width:15px;height:15px;background:#fff;box-sizing:border-box;border:1px solid #ababab"></div>
<svg style="left:979px;top:820px" width="5" height="8" viewBox="0 0 5 8"><path d="M4.2 0.1L0.1 3.6l4.1 3.5z" fill="#111"/></svg>
<div class="abs" style="left:988px;top:816px;width:445px;height:15px;background:#fff;box-sizing:border-box;border:1px solid #ababab;border-left:2px solid #9a9a9a"></div>
<div class="abs" style="left:1561px;top:816px;width:15px;height:15px;background:#fff;box-sizing:border-box;border:1px solid #ababab"></div>
<svg style="left:1566.5px;top:820px" width="5" height="8" viewBox="0 0 5 8"><path d="M0.3 0.1L4.4 3.6l-4.1 3.5z" fill="#111"/></svg>
<div class="abs" style="left:0px;top:838px;width:1597px;height:19px;background:#f3f3f3;"></div>
<div class="abs" style="left:0px;top:837px;width:1597px;height:1px;background:#d4d4d4;"></div>
<div class="t" style="left:9.00px;top:842px;line-height:12px;font-size:11.5px;color:#444;font-weight:normal;transform:scaleX(1.0034);transform-origin:0 0;">Pronto</div>
<svg style="left:61px;top:841px" width="18" height="16" viewBox="0 0 18 16" fill="none" stroke="#4a4a4a" stroke-width="1.2"><path d="M5.6 1.6A6.1 6.1 0 0 0 8.6 13.4" stroke-dasharray="2.6 1.5"/><path d="M7.6 0.3v5.6l2.4 1.6M10.6 3.6l2.2 2.1-2.4 1.6" stroke-width="1.1"/><path d="M9 8.6l7.6 6.6M16 8.2l-6.6 7.2" stroke-width="1.9"/></svg>
<div class="t" style="left:81.00px;top:842px;line-height:12px;font-size:11px;color:#333;font-weight:bold;transform:scaleX(0.9615);transform-origin:0 0;">Acessibilidade: investigar</div>
<div class="abs" style="left:1297px;top:838px;width:40px;height:19px;background:#c9c9c9;"></div>
<svg style="left:1310px;top:841px" width="14" height="14" viewBox="0 0 14 14" fill="none" stroke="#666" stroke-width="1.4"><rect x="0.7" y="0.7" width="12" height="12"/><path d="M0.7 4.7h12M0.7 8.7h12M4.7 0.7v12M8.7 0.7v12"/></svg>
<svg style="left:1350px;top:841px" width="15" height="14" viewBox="0 0 15 14" fill="none" stroke="#666" stroke-width="1.1"><rect x="0.6" y="0.6" width="13.4" height="12.4"/><rect x="3.6" y="2.8" width="7.4" height="8"/><path d="M5.2 5h4.2M5.2 6.9h4.2M5.2 8.8h4.2" stroke-width="0.9"/></svg>
<svg style="left:1390px;top:841px" width="15" height="14" viewBox="0 0 15 14" fill="none" stroke="#666" stroke-width="1.1"><rect x="0.6" y="0.6" width="13.4" height="12.4"/><path d="M0.6 7.4h8.2V0.6M4.7 0.6v6.8"/></svg>
<div class="abs" style="left:1423px;top:847px;width:8px;height:1px;background:#555;"></div>
<div class="abs" style="left:1436px;top:847px;width:100px;height:1px;background:#6a6a6a;"></div>
<div class="abs" style="left:1484px;top:842px;width:5px;height:12px;background:#444;"></div>
<div class="abs" style="left:1541px;top:847px;width:8px;height:1px;background:#555;"></div>
<div class="abs" style="left:1544.5px;top:844px;width:1px;height:8px;background:#555;"></div>
<div class="t" style="left:1563.00px;top:842px;line-height:12px;font-size:11.5px;color:#555;font-weight:normal;transform:scaleX(0.8670);transform-origin:0 0;">100%</div>
<div class="abs" style="left:1576px;top:809px;width:21px;height:1px;background:#e6e6e6;"></div>
<div class="abs" style="left:1579px;top:795px;width:15px;height:15px;background:#fff;box-sizing:border-box;border:1px solid #8e8e8e"></div>
<svg style="left:1582.5px;top:800px" width="8" height="5" viewBox="0 0 8 5"><path d="M4 4.8L7.8 0.4H0.2z" fill="#000"/></svg>
</body></html>
